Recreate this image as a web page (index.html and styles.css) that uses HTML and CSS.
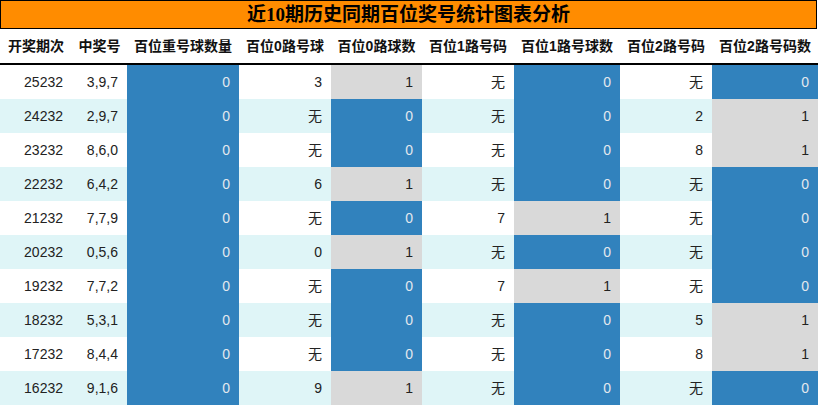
FILE: index.html
```html
<!DOCTYPE html>
<html lang="zh">
<head>
<meta charset="utf-8">
<link rel="stylesheet" href="styles.css">
</head>
<body>
<div class="title">近10期历史同期百位奖号统计图表分析</div>
<table class="stats">
<colgroup>
<col class="w72"><col class="w55"><col class="w112"><col class="w92"><col class="w91"><col class="w92"><col class="w106"><col class="w92"><col class="w106">
</colgroup>
<thead>
<tr><th>开奖期次</th><th>中奖号</th><th>百位重号球数量</th><th>百位0路号球</th><th>百位0路球数</th><th>百位1路号码</th><th>百位1路号球数</th><th>百位2路号码</th><th>百位2路号码数</th></tr>
</thead>
<tbody>
<tr><td>25232</td><td>3,9,7</td><td class="b">0</td><td>3</td><td class="g">1</td><td>无</td><td class="b">0</td><td>无</td><td class="b">0</td></tr>
<tr class="alt"><td>24232</td><td>2,9,7</td><td class="b">0</td><td>无</td><td class="b">0</td><td>无</td><td class="b">0</td><td>2</td><td class="g">1</td></tr>
<tr><td>23232</td><td>8,6,0</td><td class="b">0</td><td>无</td><td class="b">0</td><td>无</td><td class="b">0</td><td>8</td><td class="g">1</td></tr>
<tr class="alt"><td>22232</td><td>6,4,2</td><td class="b">0</td><td>6</td><td class="g">1</td><td>无</td><td class="b">0</td><td>无</td><td class="b">0</td></tr>
<tr><td>21232</td><td>7,7,9</td><td class="b">0</td><td>无</td><td class="b">0</td><td>7</td><td class="g">1</td><td>无</td><td class="b">0</td></tr>
<tr class="alt"><td>20232</td><td>0,5,6</td><td class="b">0</td><td>0</td><td class="g">1</td><td>无</td><td class="b">0</td><td>无</td><td class="b">0</td></tr>
<tr><td>19232</td><td>7,7,2</td><td class="b">0</td><td>无</td><td class="b">0</td><td>7</td><td class="g">1</td><td>无</td><td class="b">0</td></tr>
<tr class="alt"><td>18232</td><td>5,3,1</td><td class="b">0</td><td>无</td><td class="b">0</td><td>无</td><td class="b">0</td><td>5</td><td class="g">1</td></tr>
<tr><td>17232</td><td>8,4,4</td><td class="b">0</td><td>无</td><td class="b">0</td><td>无</td><td class="b">0</td><td>8</td><td class="g">1</td></tr>
<tr class="alt"><td>16232</td><td>9,1,6</td><td class="b">0</td><td>9</td><td class="g">1</td><td>无</td><td class="b">0</td><td>无</td><td class="b">0</td></tr>
</tbody>
</table>
</body>
</html>
```
FILE: styles.css
```css
html, body {
  margin: 0;
  padding: 0;
  background: #fff;
}
.title {
  box-sizing: border-box;
  width: 817px;
  height: 29px;
  border: 1px solid #000;
  background: #ff8c00;
  color: #000;
  font-family: "Liberation Serif", "Noto Sans CJK SC", serif;
  font-weight: bold;
  font-size: 19px;
  line-height: 28px;
  text-align: center;
}
.stats {
  width: 818px;
  table-layout: fixed;
  border-collapse: separate;
  border-spacing: 0;
  font-family: "Liberation Sans", "Noto Sans CJK SC", sans-serif;
  font-size: 14px;
  color: #222;
}
.w72 { width: 72px; }
.w55 { width: 55px; }
.w112 { width: 112px; }
.w92 { width: 92px; }
.w91 { width: 91px; }
.w106 { width: 106px; }
.stats th {
  padding: 1px 0 0 0;
  line-height: 33px;
  height: 33px;
  font-weight: bold;
  text-align: center;
  white-space: nowrap;
  border-bottom: 2px solid #000;
  color: #111;
}
.stats td {
  padding: 1px 9px 0 0;
  height: 33px;
  line-height: 33px;
  text-align: right;
  white-space: nowrap;
}
.stats tr.alt td { background: #dff5f7; }
.stats td.b, .stats tr.alt td.b {
  background: #3182bd;
  color: #e3e8ee;
}
.stats td.g, .stats tr.alt td.g {
  background: #d9d9d9;
  color: #222;
}
```
